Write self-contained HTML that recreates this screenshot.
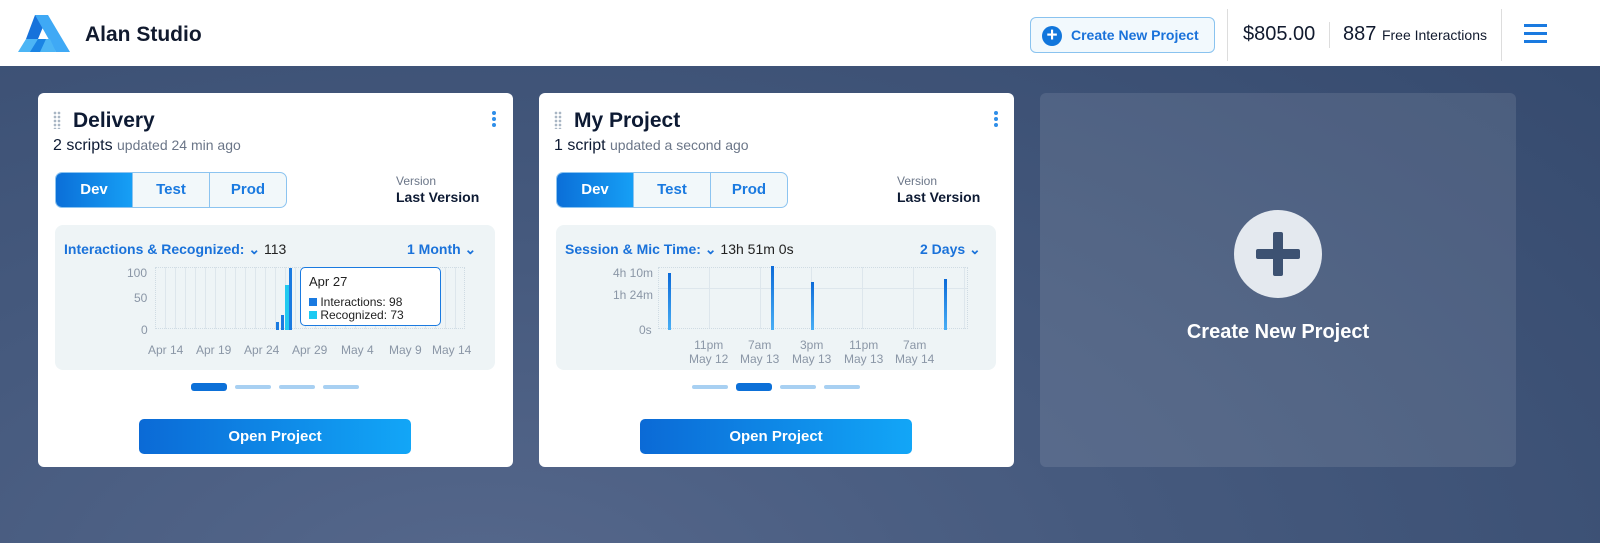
<!DOCTYPE html>
<html><head><meta charset="utf-8"><style>
*{box-sizing:border-box;margin:0;padding:0}
body{width:1600px;height:543px;overflow:hidden;font-family:"Liberation Sans",sans-serif;background:radial-gradient(ellipse at 30% 110%,#56688c 0%,#465a7e 40%,#34496d 100%);position:relative}
.hdr{position:absolute;left:0;top:0;width:1600px;height:66px;background:#fff}
.card{position:absolute;top:93px;width:475px;height:374px;background:#fff;border-radius:6px}
.t{position:absolute;font-weight:bold;color:#0d1a33}
.abs{position:absolute}
.seg{position:absolute;top:79px;left:17px;width:232px;height:36px;border:1px solid #8cc4f0;border-radius:7px;display:flex;overflow:hidden;background:#f2f8fa}
.seg div{flex:1;text-align:center;line-height:34px;font-size:15px;font-weight:bold;color:#1a7ae0;border-left:1px solid #8cc4f0}
.seg div:first-child{border:0;background:linear-gradient(90deg,#0b6fd8,#169ff5);color:#fff}
.chart{position:absolute;left:17px;top:132px;width:440px;height:145px;background:#eef4f6;border-radius:8px}
.btn{position:absolute;left:101px;top:326px;width:272px;height:35px;border-radius:5px;background:linear-gradient(90deg,#0b6ad6,#12a6f7);color:#fff;font-weight:bold;font-size:15px;text-align:center;line-height:35px}
.dots{position:absolute;top:292px;left:153px;display:flex;gap:8px}
.dots i{display:block;width:36px;height:4px;border-radius:3px;background:#a8d0f2}
.dots i.on{height:8px;margin-top:-2px;background:#0c70d8}
.lbl{position:absolute;font-size:12px;color:#8a96a6}
.grid{position:absolute;border:1px dotted #cfdbe3}
.g1{background:repeating-linear-gradient(90deg,transparent 0 9px,#dde6ec 9px 10px)}
.g2{background:repeating-linear-gradient(90deg,transparent 0 50px,#dde6ec 50px 51px),linear-gradient(transparent 0 20px,#dde6ec 20px 21px,transparent 21px)}
</style></head><body>
<div class="hdr">
<svg class="abs" style="left:18px;top:15px" width="52" height="37" viewBox="0 0 52 37"><polygon points="17,0 30,0 20,24 8,24" fill="#1772db"/><polygon points="17,0 30,0 52,37 38,37" fill="#3fa9f5"/><polygon points="0,37 8,24 32,24 38,37" fill="#4cb5f5"/><polygon points="12,37 20,24 28,24 22,37" fill="#1a84e4"/></svg>
<div class="abs" style="left:85px;top:23px;font-size:21px;color:#111a2e;font-weight:bold">Alan Studio</div>
<div class="abs" style="left:1030px;top:17px;width:185px;height:36px;border:1px solid #8ac3ef;border-radius:6px;background:#f2f9fd"></div>
<div class="abs" style="left:1042px;top:26px;width:20px;height:20px;border-radius:50%;background:#1176dc;color:#fff;font-weight:bold;font-size:19px;line-height:19px;text-align:center">+</div>
<div class="abs" style="left:1071px;top:27px;font-size:14px;color:#1a72da;font-weight:bold">Create New Project</div>
<div class="abs" style="left:1227px;top:9px;width:1px;height:52px;background:#ddd"></div>
<div class="abs" style="left:1243px;top:23px;font-size:20px;color:#111a2e">$805.00</div>
<div class="abs" style="left:1329px;top:22px;width:1px;height:26px;background:#ddd"></div>
<div class="abs" style="left:1343px;top:23px;font-size:20px;color:#111a2e">887 <span style="font-size:14px">Free Interactions</span></div>
<div class="abs" style="left:1501px;top:9px;width:1px;height:52px;background:#ddd"></div>
<div class="abs" style="left:1524px;top:24px;width:23px;height:3px;background:#1a7ae0;box-shadow:0 8px 0 #1a7ae0,0 16px 0 #1a7ae0"></div>
</div>

<div class="card" style="left:38px">
<div class="abs" style="left:15px;top:18px;width:8px;height:18px;background:radial-gradient(circle,#a9b6c4 1.2px,transparent 1.5px) 0 0/4px 4px"></div>
<div class="t" style="left:35px;top:16px;font-size:21px">Delivery</div>
<div class="abs" style="left:15px;top:44px;font-size:16px;color:#0d1a33">2 scripts <span style="font-size:14px;color:#6b7688">updated 24 min ago</span></div>
<div class="abs" style="left:454px;top:18px;width:4px;height:4px;border-radius:50%;background:#2f8ee8;box-shadow:0 6px 0 #2f8ee8,0 12px 0 #2f8ee8"></div>
<div class="seg"><div>Dev</div><div>Test</div><div>Prod</div></div>
<div class="abs" style="left:358px;top:81px;font-size:12px;color:#6b7688">Version</div>
<div class="abs" style="left:358px;top:96px;font-size:14px;font-weight:bold;color:#0d1a33">Last Version</div>
<div class="chart">
<div class="abs" style="left:9px;top:16px;font-size:14px;font-weight:bold;color:#1a72da">Interactions &amp; Recognized: ⌄ <span style="color:#222;font-weight:normal">113</span></div>
<div class="abs" style="left:352px;top:16px;font-size:14px;font-weight:bold;color:#1a72da">1 Month ⌄</div>
<div class="grid g1" style="left:100px;top:42px;width:310px;height:62px"></div>
<div class="lbl" style="left:72px;top:41px">100</div><div class="lbl" style="left:79px;top:66px">50</div><div class="lbl" style="left:86px;top:98px">0</div>
<div class="abs" style="left:221px;top:97px;width:3px;height:8px;background:#1a7ae0"></div>
<div class="abs" style="left:226px;top:90px;width:3px;height:15px;background:#1a7ae0"></div>
<div class="abs" style="left:230px;top:60px;width:4px;height:45px;background:#21c9f0"></div>
<div class="abs" style="left:234px;top:43px;width:3px;height:62px;background:#1a7ae0"></div>
<div class="abs" style="left:245px;top:42px;width:141px;height:59px;border:1.5px solid #1a7ae0;border-radius:5px;background:#fff"></div>
<div class="abs" style="left:254px;top:49px;font-size:13px;color:#222">Apr 27</div>
<div class="abs" style="left:254px;top:71px;font-size:12px;color:#222;line-height:13px"><span style="display:inline-block;width:8px;height:8px;background:#1a7ae0"></span> Interactions: 98<br><span style="display:inline-block;width:8px;height:8px;background:#1ccaf2"></span> Recognized: 73</div>
<div class="lbl" style="left:93px;top:118px">Apr 14</div><div class="lbl" style="left:141px;top:118px">Apr 19</div><div class="lbl" style="left:189px;top:118px">Apr 24</div><div class="lbl" style="left:237px;top:118px">Apr 29</div><div class="lbl" style="left:286px;top:118px">May 4</div><div class="lbl" style="left:334px;top:118px">May 9</div><div class="lbl" style="left:377px;top:118px">May 14</div>
</div>
<div class="dots"><i class="on"></i><i></i><i></i><i></i></div>
<div class="btn">Open Project</div>
</div>

<div class="card" style="left:539px">
<div class="abs" style="left:15px;top:18px;width:8px;height:18px;background:radial-gradient(circle,#a9b6c4 1.2px,transparent 1.5px) 0 0/4px 4px"></div>
<div class="t" style="left:35px;top:16px;font-size:21px">My Project</div>
<div class="abs" style="left:15px;top:44px;font-size:16px;color:#0d1a33">1 script <span style="font-size:14px;color:#6b7688">updated a second ago</span></div>
<div class="abs" style="left:455px;top:18px;width:4px;height:4px;border-radius:50%;background:#2f8ee8;box-shadow:0 6px 0 #2f8ee8,0 12px 0 #2f8ee8"></div>
<div class="seg"><div>Dev</div><div>Test</div><div>Prod</div></div>
<div class="abs" style="left:358px;top:81px;font-size:12px;color:#6b7688">Version</div>
<div class="abs" style="left:358px;top:96px;font-size:14px;font-weight:bold;color:#0d1a33">Last Version</div>
<div class="chart">
<div class="abs" style="left:9px;top:16px;font-size:14px;font-weight:bold;color:#1a72da">Session &amp; Mic Time: ⌄ <span style="color:#222;font-weight:normal">13h 51m 0s</span></div>
<div class="abs" style="left:364px;top:16px;font-size:14px;font-weight:bold;color:#1a72da">2 Days ⌄</div>
<div class="grid g2" style="left:102px;top:42px;width:310px;height:62px"></div>
<div class="lbl" style="left:57px;top:41px">4h 10m</div><div class="lbl" style="left:57px;top:63px">1h 24m</div><div class="lbl" style="left:83px;top:98px">0s</div>
<div class="abs" style="left:112px;top:48px;width:3px;height:57px;background:linear-gradient(#0c6ad8,#48aef5)"></div>
<div class="abs" style="left:215px;top:41px;width:3px;height:64px;background:linear-gradient(#0c6ad8,#48aef5)"></div>
<div class="abs" style="left:255px;top:57px;width:3px;height:48px;background:linear-gradient(#0c6ad8,#48aef5)"></div>
<div class="abs" style="left:388px;top:54px;width:3px;height:51px;background:linear-gradient(#0c6ad8,#48aef5)"></div>
<div class="lbl" style="left:133px;top:113px;text-align:center;line-height:14px">11pm<br>May 12</div>
<div class="lbl" style="left:184px;top:113px;text-align:center;line-height:14px">7am<br>May 13</div>
<div class="lbl" style="left:236px;top:113px;text-align:center;line-height:14px">3pm<br>May 13</div>
<div class="lbl" style="left:288px;top:113px;text-align:center;line-height:14px">11pm<br>May 13</div>
<div class="lbl" style="left:339px;top:113px;text-align:center;line-height:14px">7am<br>May 14</div>
</div>
<div class="dots"><i></i><i class="on"></i><i></i><i></i></div>
<div class="btn">Open Project</div>
</div>

<div class="abs" style="left:1040px;top:93px;width:476px;height:374px;border-radius:6px;background:rgba(255,255,255,0.1)">
<div class="abs" style="left:194px;top:117px;width:88px;height:88px;border-radius:50%;background:#e4e9ef"></div>
<div class="abs" style="left:233px;top:139px;width:10px;height:44px;border-radius:2px;background:#3d5272"></div>
<div class="abs" style="left:216px;top:156px;width:44px;height:10px;border-radius:2px;background:#3d5272"></div>
<div class="abs" style="left:0;width:476px;top:228px;text-align:center;color:#fff;font-size:20px;font-weight:bold">Create New Project</div>
</div>
</body></html>
